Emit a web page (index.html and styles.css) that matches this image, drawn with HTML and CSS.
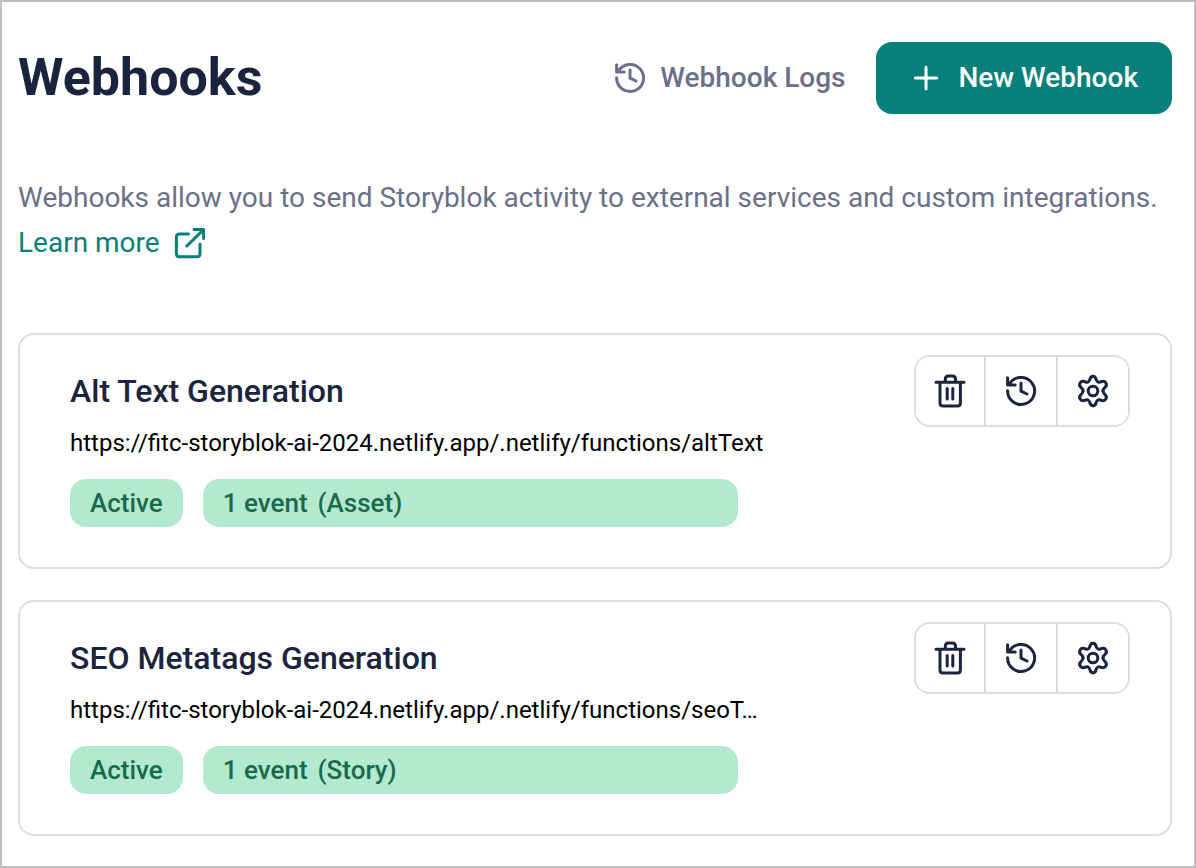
FILE: index.html
```html
<!DOCTYPE html>
<html lang="en">
<head>
<meta charset="utf-8">
<meta name="viewport" content="width=device-width, initial-scale=1">
<title>Webhooks</title>
<link rel="stylesheet" href="styles.css">
</head>
<body>
<svg class="sprite" aria-hidden="true">
  <symbol id="history" viewBox="0 0 36 36">
    <path d="M4.6 17.8A13.5 13.5 0 1 0 6.2 11.6M4.6 4.8V12H12.2M18 10V18.2L24 21"/>
  </symbol>
  <symbol id="plus" viewBox="0 0 36 36">
    <path d="M18 7.3V28.7M7.3 18H28.7"/>
  </symbol>
  <symbol id="external" viewBox="0 0 32 32">
    <path d="M14.5 7H5.5Q2.4 7 2.4 10V26.6Q2.4 29.7 5.5 29.7H22.9Q26 29.7 26 26.6V17M12.8 19L29.6 2.6M20 2.6H29.6V11.5"/>
  </symbol>
  <symbol id="trash" viewBox="0 0 36 36">
    <path d="M4 9.2H32M8 9.2V30Q8 33 11 33H25.4Q28.4 33 28.4 30V9.2M13.3 9V6.2Q13.3 3 16.5 3H20.3Q23.5 3 23.5 6.2V9M15.2 15.5V26M20.8 15.5V26"/>
  </symbol>
  <symbol id="gear" viewBox="-18 -18 36 36">
    <circle r="4.8"/>
    <path id="gear-quarter" d="M0 -14.7C1.8 -14.7 2.6 -13.5 3 -12C3.5 -9.6 5 -8.3 7.2 -9C9.5 -9.9 11.7 -10.2 12.9 -8.1C14.1 -6 13.5 -4.9 12 -3.6C10.6 -2.4 10 -1.2 10 0"/>
    <use href="#gear-quarter" transform="scale(-1 1)"/>
    <use href="#gear-quarter" transform="scale(1 -1)"/>
    <use href="#gear-quarter" transform="scale(-1 -1)"/>
  </symbol>
</svg>
<main class="page">
  <header class="header">
    <h1 class="title">Webhooks</h1>
    <button class="button button-plain" type="button"><svg class="icon"><use href="#history"/></svg>Webhook Logs</button>
    <button class="button button-primary" type="button"><svg class="icon"><use href="#plus"/></svg>New Webhook</button>
  </header>
  <p class="intro">Webhooks allow you to send Storyblok activity to external services and custom integrations. <a class="link" href="#">Learn more<svg class="icon icon-link"><use href="#external"/></svg></a></p>
  <section class="list">
    <article class="card">
      <div class="info">
        <h2 class="name">Alt Text Generation</h2>
        <p class="url">https://fitc-storyblok-ai-2024.netlify.app/.netlify/functions/altText</p>
        <div class="tags">
          <span class="tag">Active</span>
          <span class="tag tag-wide"><span>1 event</span><span>(Asset)</span></span>
        </div>
      </div>
      <div class="actions">
        <button class="action" type="button" aria-label="Delete"><svg class="icon"><use href="#trash"/></svg></button>
        <button class="action" type="button" aria-label="Logs"><svg class="icon"><use href="#history"/></svg></button>
        <button class="action" type="button" aria-label="Settings"><svg class="icon"><use href="#gear"/></svg></button>
      </div>
    </article>
    <article class="card">
      <div class="info">
        <h2 class="name">SEO Metatags Generation</h2>
        <p class="url">https://fitc-storyblok-ai-2024.netlify.app/.netlify/functions/seoT…</p>
        <div class="tags">
          <span class="tag">Active</span>
          <span class="tag tag-wide"><span>1 event</span><span>(Story)</span></span>
        </div>
      </div>
      <div class="actions">
        <button class="action" type="button" aria-label="Delete"><svg class="icon"><use href="#trash"/></svg></button>
        <button class="action" type="button" aria-label="Logs"><svg class="icon"><use href="#history"/></svg></button>
        <button class="action" type="button" aria-label="Settings"><svg class="icon"><use href="#gear"/></svg></button>
      </div>
    </article>
  </section>
</main>
</body>
</html>
```
FILE: styles.css
```css
* {
  box-sizing: border-box;
}

body {
  margin: 0;
  background: #fff;
  color: #1b243f;
  font-family: Roboto, sans-serif;
}

h1, h2, p {
  margin: 0;
}

.sprite {
  position: absolute;
  width: 0;
  height: 0;
}

.page {
  min-height: 100vh;
  padding: 40px 22px 30px 16px;
  border: 2px solid #bfbfbf;
}

.header {
  display: flex;
  align-items: center;
  gap: 30px;
}

.title {
  flex: 1;
  font-size: 52px;
  line-height: 72px;
  font-weight: 700;
}

.icon {
  flex: none;
  width: 36px;
  height: 36px;
  fill: none;
  stroke: currentColor;
  stroke-width: 3;
  stroke-linecap: round;
  stroke-linejoin: round;
}

.button {
  display: flex;
  align-items: center;
  gap: 12px;
  height: 72px;
  padding: 0;
  border: 0;
  background: none;
  color: #6b7089;
  font: 500 28px/40px Roboto, sans-serif;
}

.button-primary {
  gap: 15px;
  padding: 0 34px 0 32px;
  border-radius: 16px;
  background: #07807c;
  color: #fff;
}

.intro {
  margin-top: 61px;
  color: #6b7089;
  font-size: 28px;
  line-height: 45px;
}

.link {
  display: inline-flex;
  align-items: center;
  gap: 14px;
  color: #07807c;
  text-decoration: none;
}

.icon-link {
  width: 32px;
  height: 32px;
}

.list {
  display: grid;
  gap: 31px;
  margin-top: 68px;
}

.card {
  display: flex;
  align-items: flex-start;
  justify-content: space-between;
  padding: 20px 40px 40px 50px;
  border: 2px solid #dcdde0;
  border-radius: 16px;
}

.info {
  width: 66%;
  padding-top: 16px;
}

.name {
  font-size: 32px;
  line-height: 40px;
  font-weight: 500;
}

.url {
  margin: 16px 0 20px;
  overflow: hidden;
  color: #000;
  font-size: 24px;
  line-height: 32px;
  white-space: nowrap;
  text-overflow: ellipsis;
}

.tags {
  display: flex;
  gap: 20px;
  margin-right: 32px;
}

.tag {
  display: flex;
  gap: 10px;
  padding: 0 20px;
  border-radius: 16px;
  background: #b2e9cf;
  color: #186a4b;
  font-size: 26px;
  line-height: 48px;
  font-weight: 500;
}

.tag-wide {
  flex: 1;
}

.actions {
  display: flex;
  overflow: hidden;
  border: 2px solid #dcdde0;
  border-radius: 16px;
}

.action {
  display: grid;
  place-items: center;
  width: 68px;
  height: 68px;
  padding: 0;
  border: 0;
  background: #fff;
  color: #1b243f;
}

.action + .action {
  width: 72px;
  border-left: 2px solid #dcdde0;
}
```
